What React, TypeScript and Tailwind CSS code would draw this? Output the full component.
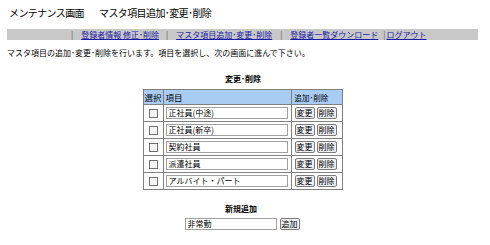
const rows = ['正社員(中途)', '正社員(新卒)', '契約社員', '派遣社員', 'アルバイト・パート'];

function Btn({ label }: { label: string }) {
  return (
    <button className="h-[12px] w-[20px] shrink-0 whitespace-nowrap p-0 border border-[#7a7a7a] rounded-[2px] bg-[#eef0f4] text-[8px] leading-[10px] text-black text-center">
      {label}
    </button>
  );
}

function Sep({ className = '' }: { className?: string }) {
  return <span className={`text-[#555] ${className}`}>|</span>;
}

export default function App() {
  return (
    <div
      className="w-[490px] h-[245px] bg-white text-black text-[8px] overflow-hidden"
      style={{ fontFamily: '"Noto Sans CJK JP", "Noto Sans", sans-serif' }}
    >
      <div className="pt-[5px] pl-[9px] text-[10px] leading-[16px] tracking-[-0.6px] whitespace-nowrap">
        メンテナンス画面<span className="inline-block w-[15px]" />マスタ項目追加･変更･削除
      </div>

      {/* nav bar */}
      <div className="mt-[8px] ml-[7px] w-[471px] h-[11px] bg-[#c8c8c8] flex items-center pl-[64px] text-[8px] leading-[11px] whitespace-nowrap">
        <Sep />
        <a className="ml-[8px] text-[#1a1aa6] underline">登録者情報 修正･削除</a>
        <Sep className="ml-[7px]" />
        <a className="ml-[8px] text-[#1a1aa6] underline">マスタ項目追加･変更･削除</a>
        <Sep className="ml-[8px]" />
        <a className="ml-[8px] text-[#1a1aa6] underline">登録者一覧ダウンロード</a>
        <Sep className="ml-[5px]" />
        <a className="ml-[1px] text-[#1a1aa6] underline">ログアウト</a>
      </div>

      <div className="mt-[7px] pl-[7px] leading-[12px] whitespace-nowrap">
        マスタ項目の追加･変更･削除を行います。項目を選択し、次の画面に進んで下さい。
      </div>

      <div className="mt-[14px] text-center font-bold leading-[12px] pr-[4px]">変更･削除</div>

      <div className="flex justify-center mt-[4px]">
        <table className="table-fixed border-collapse border border-[#808080] w-[199px] -ml-[5px]">
          <colgroup>
            <col className="w-[20px]" />
            <col className="w-[128px]" />
            <col className="w-[51px]" />
          </colgroup>
          <thead>
            <tr className="bg-[#a9cdf2]">
              <th className="h-[15px] p-0 border border-[#808080] font-normal text-left pl-[1px] leading-[13px] whitespace-nowrap text-[8.5px]">選択</th>
              <th className="h-[15px] p-0 border border-[#808080] font-normal text-left pl-[2px] leading-[13px] text-[8.5px]">項目</th>
              <th className="h-[15px] p-0 border border-[#808080] font-normal text-left pl-[3px] leading-[13px] text-[7.5px] whitespace-nowrap">追加･削除</th>
            </tr>
          </thead>
          <tbody>
            {rows.map((r) => (
              <tr key={r}>
                <td className="h-[17px] p-0 border border-[#808080]">
                  <div className="mx-auto w-[9px] h-[9px] border border-[#707070] bg-[#f4f4f4]" />
                </td>
                <td className="h-[17px] p-0 border border-[#808080] px-[2px]">
                  <div className="h-[12px] w-[122px] border border-[#a0a0a0] bg-white pl-[2px] leading-[10px] text-[8px] whitespace-nowrap overflow-hidden">
                    {r}
                  </div>
                </td>
                <td className="h-[17px] p-0 border border-[#808080] pl-[3px]">
                  <div className="flex gap-[2px]">
                    <Btn label="変更" />
                    <Btn label="削除" />
                  </div>
                </td>
              </tr>
            ))}
          </tbody>
        </table>
      </div>

      <div className="mt-[13px] text-center font-bold leading-[12px] pr-[8px]">新規追加</div>
      <div className="mt-[3px] flex justify-center items-center gap-[3px] pr-[6px]">
        <div className="h-[12px] w-[92px] border border-[#a0a0a0] bg-white pl-[2px] leading-[10px] text-[8px]">
          非常勤
        </div>
        <Btn label="追加" />
      </div>
    </div>
  );
}
